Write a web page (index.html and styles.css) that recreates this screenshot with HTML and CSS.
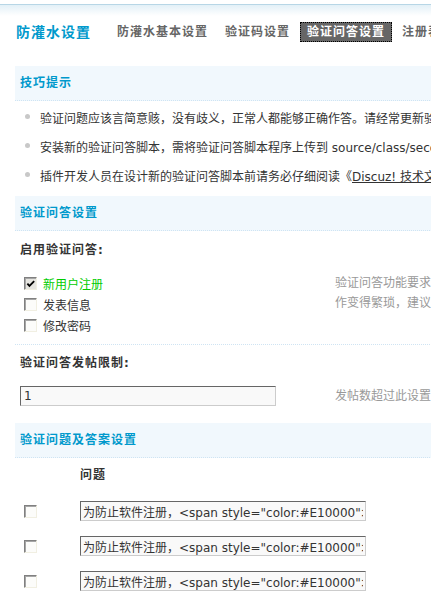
FILE: index.html
```html
<!DOCTYPE html>
<html lang="zh-CN">
<head>
<meta charset="utf-8">
<title>防灌水设置</title>
<link rel="stylesheet" href="styles.css">
</head>
<body>
<div class="page">
  <div class="topline"></div>
  <div class="itemtitle">
    <h3>防灌水设置</h3>
    <ul class="tabs">
      <li>防灌水基本设置</li>
      <li>验证码设置</li>
      <li class="current">验证问答设置</li>
      <li>注册表单设置</li>
    </ul>
  </div>

  <div class="main">
    <div class="partition">技巧提示</div>
    <ul class="tips">
      <li>验证问题应该言简意赅，没有歧义，正常人都能够正确作答。请经常更新验证问答的问题及答案以防止被猜测</li>
      <li>安装新的验证问答脚本，需将验证问答脚本程序上传到 source/class/secqaa/ 目录，然后即可在以下列表中使用了</li>
      <li>插件开发人员在设计新的验证问答脚本前请务必仔细阅读《 <a href="#">Discuz! 技术文档</a> 》中的内容</li>
    </ul>

    <div class="partition">验证问答设置</div>
    <div class="row-title first">启用验证问答:</div>
    <div class="row-body">
      <ul class="cblist">
        <li><span class="cb checked"><svg width="11" height="11" viewBox="0 0 11 11"><polyline points="1.5,4.5 3.8,7 9,1.8" fill="none" stroke="#000" stroke-width="2"/></svg></span><span class="on">新用户注册</span></li>
        <li><span class="cb"></span><span>发表信息</span></li>
        <li><span class="cb"></span><span>修改密码</span></li>
      </ul>
      <div class="desc">验证问答功能要求用户在执行这些操作时回答问题，开启过多会使用户操<br>作变得繁琐，建议只在新用户注册时开启</div>
    </div>

    <div class="row-title second">验证问答发帖限制:</div>
    <div class="row-input">
      <div class="left"><input class="txt" type="text" value="1"></div>
      <div class="desc">发帖数超过此设置的会员将不受验证问答限制</div>
    </div>

    <div class="partition">验证问题及答案设置</div>
    <div class="qhead">问题</div>
    <div class="qlist">
      <div class="qrow"><span class="cb"></span><input class="txt q" type="text" value='为防止软件注册，&lt;span style="color:#E10000"&gt;请输入验证码&lt;/span&gt;'></div>
      <div class="qrow"><span class="cb"></span><input class="txt q" type="text" value='为防止软件注册，&lt;span style="color:#E10000"&gt;请输入验证码&lt;/span&gt;'></div>
      <div class="qrow"><span class="cb"></span><input class="txt q" type="text" value='为防止软件注册，&lt;span style="color:#E10000"&gt;请输入验证码&lt;/span&gt;'></div>
    </div>
  </div>
</div>
</body>
</html>
```
FILE: styles.css
```css
html, body {
  margin: 0;
  padding: 0;
}
body {
  font-family: "DejaVu Sans", "Noto Sans CJK SC", sans-serif;
  font-size: 12px;
  color: #333;
  background: #fff;
  overflow: hidden;
}
.page {
  width: 1000px;
}
.topline {
  margin-top: 4px;
  height: 11px;
  border-top: 1px solid #b7d6e6;
  background: linear-gradient(#e3f0f7, #fff);
}
.itemtitle {
  display: flex;
  align-items: center;
  height: 26px;
  margin-top: 3px;
  padding-left: 16px;
}
.itemtitle h3 {
  margin: 0 19px 0 0;
  font-size: 14px;
  letter-spacing: 1px;
  line-height: 26px;
  color: #09c;
  font-weight: bold;
}
.tabs {
  display: flex;
  gap: 3px;
  list-style: none;
  margin: 0;
  padding: 0;
}
.tabs li {
  padding: 0 7px;
  line-height: 20px;
  font-weight: bold;
  letter-spacing: 1px;
  color: #666;
  white-space: nowrap;
}
.tabs li.current {
  background: #666;
  color: #fff;
  outline: 1px dotted #000;
  outline-offset: -1px;
}
.main {
  padding-left: 15px;
  margin-top: 21px;
}
.partition {
  height: 34px;
  line-height: 34px;
  padding-left: 5px;
  background: #f1f8fd;
  border-bottom: 1px dotted #cfe4f3;
  color: #09c;
  font-weight: bold;
  letter-spacing: 1px;
}
.tips {
  list-style: none;
  margin: 0;
  padding: 2px 0 6px;
}
.tips li {
  display: flex;
  align-items: center;
  height: 29px;
  padding-left: 10px;
  white-space: nowrap;
}
.tips li::before {
  content: "";
  flex: none;
  width: 5px;
  height: 5px;
  margin: -3px 10px 0 0;
  border-radius: 50%;
  background: #c8c8c8;
}
.tips a {
  color: #333;
  text-decoration: underline;
}
.row-title {
  padding-left: 5px;
  line-height: 20px;
  font-weight: bold;
  letter-spacing: 1px;
}
.row-title.first {
  padding-top: 9px;
}
.row-title.second {
  padding-top: 8px;
}
.row-body {
  display: flex;
  padding: 13px 0 8px;
  border-bottom: 1px dotted #cfe4f3;
}
.cblist {
  list-style: none;
  margin: 0;
  padding: 0 0 0 9px;
  width: 320px;
  box-sizing: border-box;
  flex: none;
}
.cblist li {
  display: flex;
  align-items: center;
  gap: 6px;
  height: 21px;
}
.on {
  color: #00cc00;
}
.desc {
  color: #999;
  line-height: 20px;
  white-space: nowrap;
}
.cb {
  display: inline-flex;
  align-items: center;
  justify-content: center;
  width: 13px;
  height: 13px;
  box-sizing: border-box;
  border: 1px solid;
  border-color: #808080 #f1efe2 #f1efe2 #808080;
  box-shadow: inset 1px 1px 0 #a6a6a6;
  background: #fcfcfa;
  flex: none;
}
.cb.checked {
  background: #e6e5e0;
}
.cb svg {
  display: block;
  margin: 1px 0 0 1px;
}
.row-input {
  display: flex;
  align-items: center;
  padding: 13px 0 17px;
}
.row-input .left {
  width: 320px;
  padding-left: 5px;
  box-sizing: border-box;
  flex: none;
}
.txt {
  display: block;
  box-sizing: border-box;
  width: 256px;
  height: 20px;
  margin: 0;
  padding: 0 3px;
  border: 1px solid;
  border-color: #666 #ccc #ccc #666;
  background: #f9f9f9;
  font-family: "DejaVu Sans", "Noto Sans CJK SC", sans-serif;
  font-size: 12px;
  color: #333;
  outline: none;
}
.txt.q {
  width: 286px;
  padding: 0 2px;
}
.qhead {
  padding: 7px 0 0 65px;
  line-height: 20px;
  font-weight: bold;
  letter-spacing: 1px;
}
.qlist {
  display: grid;
  row-gap: 15px;
  padding-top: 16px;
}
.qrow {
  display: grid;
  grid-template-columns: 56px 286px;
  align-items: center;
  padding-left: 9px;
  height: 20px;
}
```
